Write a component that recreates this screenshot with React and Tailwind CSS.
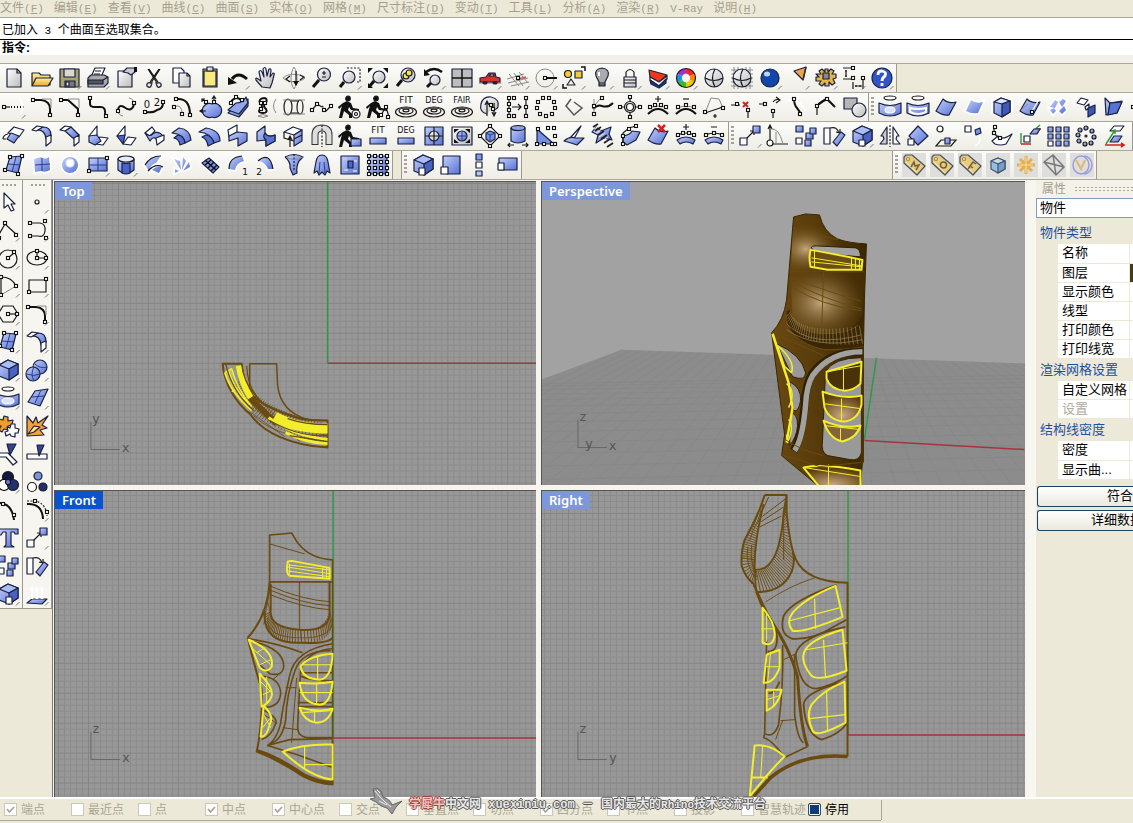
import React from "react";

/* ---------- Icon notation ----------
   Each icon is a "|"-separated list of strokes and fills on a 24x24 grid. */
const FILLS = { b: "url(#blue)", w: "#fff", v: "url(#grey)", y: "url(#gold)", s: "#111", x: "none" };
const STROKES = {
  k: ["#1a1a1a", 1.2], K: ["#111", 2], g: ["#8a8a8a", 1], r: ["#d02020", 1.6], G: ["#2d9a3a", 1.4],
  H: ["#fff", 4], m: ["#2c3c88", 1], W: ["#fff", 1.3],
};

function Op({ op }) {
  const i = op.indexOf(" ");
  const c = i < 0 ? op : op.slice(0, i);
  const d = i < 0 ? "" : op.slice(i + 1);
  if (c === "z") return <path d="M20 23.5L23.500 20" stroke="#777" strokeWidth="1" />;
  if (c === "n")
    return d.split(" ").map((p) => {
      const [x, y] = p.split(",").map(Number);
      return <rect key={p} x={x - 1.5} y={y - 1.5} width="3" height="3" fill="#fff" stroke="#111" strokeWidth="1.100" />;
    });
  if (c === "o") {
    const [x, y, rx, ry, f, s] = d.split(",");
    return <ellipse cx={x} cy={y} rx={rx} ry={ry} fill={FILLS[f] || f} stroke={s || "#1a1a1a"} strokeWidth="1.200" />;
  }
  if (c === "t") {
    const [x, y, s, t] = d.split(",");
    return <text x={x} y={y} fontSize={s} textAnchor="middle" className="font-['DejaVu_Sans']" fill="#111">{t}</text>;
  }
  if (c === "d") return <path d={d} fill="none" stroke="#222" strokeWidth="1.200" strokeDasharray="2 1.500" />;
  if (c === "h") return <g><path d={d} fill="#fff" stroke="#fff" strokeWidth="3.500" /><path d={d} fill="url(#blue)" /></g>;
  if (c[0] === "/") {
    const [s, w] = c.slice(1).split(",");
    return <path d={d} fill="none" stroke={s} strokeWidth={w} />;
  }
  if (STROKES[c]) return <path d={d} fill="none" stroke={STROKES[c][0]} strokeWidth={STROKES[c][1]} />;
  return <path d={d} fill={FILLS[c] || c} stroke={c === "s" ? "none" : "#1b2140"} strokeWidth="1.200" strokeLinejoin="round" />;
}

function Tool({ name, art, soft }) {
  return (
    <button type="button" aria-label={name} title={name} className="grid h-7 w-7 shrink-0 place-items-center">
      <svg viewBox="0 0 24 24" className={soft ? "h-6 w-6 bg-[#dededc]" : "h-6 w-6 overflow-visible"} aria-hidden="true">
        <g opacity={soft ? 0.75 : 1}>{art.split("|").map((op, i) => <Op key={i} op={op} />)}</g>
      </svg>
    </button>
  );
}

const man = "o 10,3.500,2.300,2.300,s|s M5 8L9 6L13 8L15 13L21 14V16L13 15L11 12L10 15L14 19V23H11V20L6 16L4 23H1L3 14L4 11L1 14L0 12Z";
const rings = "o 12,17,10.500,5,x|o 12,16,7,3,x|o 12,15.500,3,1.300,x";
const boxArt = "b M3 7L12 2L22 6V16L13 22L3 18Z|#a9bdf6 M3 7L12 2L22 6L13 11Z|#4a62c4 M13 11L22 6V16L13 22Z";
const surf = "b M2 16L9 4Q14 9 22 7L15 20Q9 21 2 16Z";
const fillet = "K M3 5H11Q20 6 20 14V20|g M12 4H21V13|n 3,5 20,20";
const tag = "#e9c760 M2 4L4 2L10 2L23 13L15 22L2 10Z|o 6,6,1.500,1.500,#fff7d0,#8a6a20|/#fff0a8,1 M4 9L15 20";
const moveArt = "k M7 16L16 7M12 7H16V11|w M2 14H9V21H2Z|b M15 2H22V9H15Z";
const arrayArt = "b M2 2H9V8H2Z|b M12 9H19V15H12Z|b M16 4H22V10H16Z|w M2 14H8V20H2Z|b M11 16H17V22H11Z";
const rotArt = "w M2 4H8V20H2Z|k M8 4Q15 2 17 9M14 8L18 9L18 5|b M11 18L19 8L23 11L15 22Z";
const shell = "w M2 8L11 3L20 6L12 11Z|b M12 11L20 6V17L12 22Z|k M12 15L20 11M2 8V14L12 17";

const standard = {
  New: "v M5 3H15L19 7V21H5Z|k M15 3V7H19",
  Open: "y M2 7H9L11 9H20V19H2Z|y M6 12H23L18 20H2Z",
  Save: "#aaa26e M2 3H21V21H2Z|#d9d9d0 M6 3H17V11H6Z|#777 M7 15H17V21H7Z|#ddd M8 16H11V20H8Z|z",
  Print: "w M9 2H19L15 11H5Z|#aaa M2 12L5 9H18L22 11V17L18 21H2Z|#555 M2 14H17V18H2Z|k M17 14L22 11M9 5H15M8 8H14|z",
  Properties: "v M4 5H14L18 8V21H4Z|#ccc M9 6L13 2H21V6L17 9L14 7Z|s M20 1H23V6H20Z",
  Cut: "k M6 3L15 17M7 3L16 16M18 3L9 17M17 3L8 16|/#334,1.500 M9 17Q4 16 5 20Q9 24 10 16M15 17Q20 16 19 20Q15 24 14 16",
  Copy: "w M3 2H11L14 5V17H3Z|v M9 7H17L20 10V21H9Z|k M17 7V10H20",
  Paste: "#c8a93c M5 3H19V21H5Z|#f8ea80 M6 5H18V20H6Z|v M9 1H15V5H9Z",
  Undo: "/#111,3 M6 13Q12 5 21 13|s M2 11L11 17L2 19Z|z",
  Pan: "v M8 21L2 14Q1 11 4 13L7 15L5 6Q6 3 8 6L10 11L9 3Q11 0 12 3L13 10L15 3Q17 2 17 5L16 11L19 7Q21 7 20 9L18 17L16 22Z",
  "Rotate view": "g M12 1C8 7 8 17 12 23C16 17 16 7 12 1M1 12C6 7 18 7 23 12C18 17 6 17 1 12|k M14 5V19M8 16L4 13L8 10M18 9L22 11L18 14|s M11 15L14 20L17 15Z",
  "Zoom dynamic": "v M14 2A6.500 6.500 0 1 0 14 15A6.500 6.500 0 1 0 14 2|k M14 5V9M12 7H16M12 11H16|/#111,3 M9 14L3 21",
  "Zoom window": "d M9 2H22V16H18|v M11 5A6 6 0 1 0 11 17A6 6 0 1 0 11 5|/#111,3 M6 16L2 21|z",
  "Zoom extents": "v M13 5A6 6 0 1 0 13 17A6 6 0 1 0 13 5|/#111,3 M8 15L3 21|s M2 2H7L2 7ZM22 2V7L17 2ZM22 22H17L22 17ZM2 22V17L7 22Z",
  "Zoom selected": "v M14 2A7 7 0 1 0 14 16A7 7 0 1 0 14 2|o 12,10,3,3,#f4e34a|o 15,7,3,3,#f4e34a|/#111,3 M8 14L3 20",
  "Undo zoom": "/#111,2.500 M4 6Q12 0 20 6|s M2 3L8 9L2 10Z|v M13 9A5 5 0 1 0 13 19A5 5 0 1 0 13 9|/#111,3 M9 17L5 21|z",
  "Four views": "#bdbdbd M2 3H22V21H2Z|/#111,1.500 M12 3V21M2 12H22",
  "Set view": "/#e33,1 M1 17H23|#d93226 M2 12L8 11L11 7H17L18 11L22 12V16H2Z|#222 M5 16A2 2 0 1 0 9 16ZM15 16A2 2 0 1 0 19 16Z|#fff M13 8H15L16 10H11Z|z",
  "Set CPlane": "g M3 8L13 20M8 7L17 20M13 6L22 17M2 17L22 12M1 13L18 8M5 20L23 16|/#b55,1.500 M12 13L20 11|n 12,12|z",
  "Object snap": "g M11 3A9 9 0 1 0 11 21A9 9 0 1 0 11 3|K M12 12H23|n 11,12|z",
  Select: "o 6,8,3.500,3.500,#f3cc35|#f3cc35 M13 5H20V12H13Z|#fff0c0 M5 19L9 13L13 19Z|/#111,1.500 M19 1H23V5M1 18V22H5|z",
  Light: "#aaa M12 2Q4 3 6 10L9 16V20H15V16L18 10Q20 3 12 2|k M9 17H15M9 19H15|/#fff,2 M9 6V10|z",
  Lock: "k M8 11V6Q12 1 16 6V11|v M6 11H18V21H6Z|k M6 14H18M6 17H18|z",
  Render: "#f03818 M3 4L21 9L13 16L4 11Z|#fff M4 11L13 16L21 10V13L13 20L4 14Z|#183ca0 M4 14L13 20L20 13V17L13 22L5 18Z|z",
  Colour: "/#f22,5 M12 5A7 7 0 0 1 18 9|/#f80,5 M18 9A7 7 0 0 1 18 15|/#ec0,5 M18 15A7 7 0 0 1 12 19|/#3b3,5 M12 19A7 7 0 0 1 6 15|/#19d,5 M6 15A7 7 0 0 1 6 9|/#93d,5 M6 9A7 7 0 0 1 12 5|o 12,12,9.500,9.500,x|z",
  Shade: "v M12 3A9 9 0 1 0 12 21A9 9 0 1 0 12 3|k M3 12Q12 17 21 12M13 3Q8 12 13 21",
  "Shade grid": "g M1 4H23M1 8H23M1 12H23M1 16H23M1 20H23M4 1V23M8 1V23M16 1V23M20 1V23|v M12 3A9 9 0 1 0 12 21A9 9 0 1 0 12 3|k M3 12Q12 17 21 12M13 3Q8 12 13 21",
  Preview: "#1146aa M12 3A9 9 0 1 0 12 21A9 9 0 1 0 12 3|o 9,8,3,2.500,#bcd8ff,none|z",
  Spotlight: "#f0a24a M8 5L20 1L17 14Z|/#333,1.500 M20 1L17 14|z",
  Options: "#e3b64a M7 8L5 5L8 3L11 6V3H14V6L17 3L20 5L18 8L22 8V12L19 13L21 17L18 19L15 16V20H11V17L8 20L5 18L7 15L2 15V11L5 11L2 8Z|#888 M9 7H15V13H9Z|z",
  Dimension: "k M1 2H11M1 13H11M4 4V11M3 5L5 5M3 10L5 10M11 16V23M21 12V23M13 20H20M14 19V21M18 19V21|n 11,2 11,12 21,12|z",
  Help: "#2f55c8 M12 2A10 10 0 1 0 12 22A10 10 0 1 0 12 2|/#fff,2.800 M8 9Q8 5 12 5Q17 6 15 10Q12 12 12 15M12 17V20|z",
};

const curves = {
  Extend: "/#111,2 M9 12H10M12 12H13M15 12H16M18 12H19M21 12H22|k M2 12H8|n 2,12|W M18 4Q24 12 18 20|z",
  "Fillet curves": fillet,
  "Chamfer curves": "K M3 5H10L20 14V20|g M10 4H21V13|n 3,5 20,20",
  "Connect curves": "K M4 4V9Q4 12 9 12H15Q20 12 19 20|n 4,3 20,21",
  "Blend curves": "K M4 16Q4 9 10 12Q18 18 20 9|g M4 16Q4 20 9 21M20 9Q20 4 15 3|n 4,16 20,8",
  "Blend adjust": "K M3 17Q12 18 15 15Q21 14 21 8|n 3,17 21,7|t 5,13,10,0|t 15,11,10,2",
  Offset: "K M7 4Q20 3 20 20|g M5 11Q12 10 12 18|n 6,4 20,20 4,12 12,19",
  "Blend sphere": "b M14 9A7 7 0 1 0 14 22A7 7 0 1 0 14 9|k M3 16H8M8 7L4 4M16 8V2M14 4L16 1L18 4M5 14L2 16L5 18M4 7V4H7|n 8,7 16,7",
  "Offset on surface": "b M2 18L10 11Q19 10 22 4V11L13 22Z|#8fa6ee M2 15L10 8Q17 8 20 2L22 8L13 19Z|K M4 8Q9 0 15 5|n 5,8 10,2 16,5",
  "Closed curve": "K M10 3Q4 4 6 8Q10 11 6 14Q3 18 9 18Q14 18 12 14Q8 11 12 8Q14 3 10 3|g M4 21Q9 18 14 21Q9 24 4 21M22 4Q17 11 22 18|n 7,8 11,8 7,14",
  Section: "o 6,12,4,8,x|o 18,12,3,7,x|g M1 5H23M1 19H23|k M9 6H17M9 18H17",
  "Match curve": "k M2 15L7 9L12 12M16 16L21 11|d M12 11L15 14|n 2,15 7,9 14,15 21,11",
  "Rebuild curve": man + "|o 18,19,4,4,#fff|o 18,19,1.500,1.500,#fff",
  "Rebuild master": man + "|k M15 20L20 12L23 22|n 15,20 20,12 22,22",
  Fit: rings + "|t 12,8,9,FIT",
  Degree: rings + "|t 12,8,8,DEG",
  Fair: rings + "|t 12,8,8,FAIR",
  Simplify: "v M9 19Q1 17 3 9Q5 1 13 2Q22 4 20 12Q18 16 14 13|k M9 21V7M7 10L9 6L11 10M16 8V20M14 17L16 21L18 17|n 13,10 15,14",
  "Control points": "k M3 2V22M20 2V22M6 12H15M12 9L15 12L12 15|n 3,3 3,9 3,15 3,21 8,3 8,21 20,3 20,12 20,21",
  "Edit points": "n 9,3 15,3 20,7 21,13 18,19 12,21 6,19 3,13 4,7",
  Seam: "/#555,1.500 M9 4L4 11L12 20L20 13L12 7",
  "Handle editor": "K M3 14Q8 9 12 11Q18 13 23 8|g M4 4V19M4 11L11 3|n 4,11 4,19 12,3",
  Weight: "k M3 12H21M12 3V21|o 12,12,5.500,5.500,v|o 12,12,3.500,3.500,w|n 12,2 12,22 2,12 22,12",
  "Insert knot": "K M2 19Q12 9 22 19|g M2 14Q12 8 22 14|k M12 1V7M9 4H15|n 4,12 9,10 15,10 20,12",
  "Remove knot": "K M2 19Q12 9 22 19|g M2 14Q12 8 22 14|k M9 4H15|n 4,12 12,10 20,12",
  "Insert point": "g M3 18L9 3L17 4L21 13|k M3 18L21 12M13 19V23M11 21H15|n 3,17 21,13",
  "Insert kink": "k M1 10H10M18 16V23|/#c22,2 M13 7L18 12M18 7L13 12|n 7,9 18,15",
  "Pull points": "k M1 9H8M15 7Q18 3 22 5M18 2L22 5L18 8M15 16V23|n 7,9 15,16",
  "Arc blend": "K M8 3Q8 10 11 13T15 21|W M2 5Q13 3 20 16|n 8,4 14,19",
  "Curve through": "k M3 11L13 4M3 11V20|K M3 11Q7 6 13 4L21 12|n 3,11 13,4",
  "Curve boolean": "#b6b6b6 M2 3H15V14H2Z|v M17 8A7 7 0 1 0 17 22A7 7 0 1 0 17 8",
};

const tube = (inner) => "b M1 8Q12 13 23 8V18Q12 24 1 18Z|o 12,3,6,2,w|" + inner;
const surfaces = {
  "Untrim hole": tube("o 12,15,5,3,#dbe4ff,#fff"),
  "Untrim edge": tube("/#fff,2 M4 13Q12 15 20 13V17Q12 21 4 17Z"),
  "Shrink surface": surf,
  "Surface plain": "h M4 16L9 5Q14 9 21 7L16 18Q9 19 4 16Z",
  "Solid box": "W M2 5L10 1L22 5V17L13 23L2 18Z|b M4 7L11 3L20 6V17L12 22L4 18Z|#dce4ff M4 7L11 3L20 6L12 9Z|#4058b8 M12 9L20 6V17L12 22Z",
  "Split edge": surf + "|W M13 18L20 6|g M3 15L10 9|n 14,17",
  "Split surface": "h M4 12L9 5L12 7L9 13ZM13 7L17 4L20 6L16 12ZM4 15L8 13L10 16L7 19ZM13 16L18 11L20 15L16 19Z",
  Detach: "w M3 8L7 3L14 5L10 10Z|w M11 12L15 9V13L12 15Z|#3d54b0 M14 13L21 10V18L14 22Z",
  "Merge surface": "b M3 3L8 8L20 6L15 18L4 20Z|k M8 8L6 20|#5673d8 M8 8L20 7L15 18L6 20Z",
  "Surface side": "n 3,12|b M8 4H20V20H8Z",
};

const surfTools = {
  "Extend surface": "w M6 9L12 3L22 6L17 13Z|b M5 15L9 9L17 12L12 19Z|k M1 15Q1 11 6 10M1 15L4 15",
  "Fillet surface": "b M6 6Q15 5 16 15L21 12Q21 3 13 3Z|w M2 6L7 2L13 3L6 7Z|w M16 13L21 11V18L16 22Z",
  "Chamfer surface": "b M7 7L13 3L21 11L16 15Z|w M2 6L7 2L13 3L7 7Z|w M16 14L21 11V18L16 22Z",
  "Blend 3": "w M3 12L11 2V11L8 13Z|w M14 13L22 14L17 21L9 20Z|b M3 12L11 11L15 17L9 21L3 18Z",
  "Chamfer 3": "w M3 12L11 2V11L8 13Z|w M14 13L22 14L17 21L9 20Z|#4964c8 M3 12L11 11L9 20Z",
  "Blend surface": "w M3 9L10 3L13 7L8 12Z|b M3 9Q7 14 12 9Q17 7 21 12L16 18Q12 10 8 17Z|w M14 14L22 11V16L15 21Z",
  "Offset surface": "b M2 9L9 4Q20 5 21 16L15 19Q14 10 2 9Z|#526fd3 M4 14L8 11Q14 12 15 19L10 21Q9 15 4 14Z",
  "Variable offset": "b M1 8L8 4Q22 6 22 17L16 19Q13 9 1 8Z|#526fd3 M4 13L8 11Q14 12 16 19L10 22Q9 15 4 13Z",
  "Match surface": "w M2 6L11 1V8L3 13Z|b M3 12L11 8L21 9V17L12 22V14L3 17Z",
  "Merge edge": "b M3 8L11 2V9Q14 14 21 11V17L12 22V16L3 17Z|#5873d4 M11 9Q14 14 21 11V17L12 22V16Q8 13 11 9Z",
  Unroll: shell + "|k M8 23V13M6 16L8 12L10 16",
  Tween: "/#333,7 M5 21V11Q5 4 12 4Q19 4 19 11V21|/#ddd,5 M5 20V11Q5 4 12 4Q19 4 19 11V20|d M12 1V23",
  "Rebuild surface": man + "|b M13 15H23V22H13Z",
  "Fit surface": "t 12,9,9,FIT|b M4 14H20V20H4Z",
  "Change degree": "t 12,9,8,DEG|b M4 14H20V20H4Z",
  Reparam: "b M3 3H21V21H3Z|v M12 7A5 5 0 1 0 12 17A5 5 0 1 0 12 7|k M12 3V21M3 12H21",
  "Fit to box": "v M2 3H22V21H2Z|b M12 7A5 5 0 1 0 12 17A5 5 0 1 0 12 7|s M4 5H9L4 9ZM20 5V9L15 5ZM20 19H15L20 15ZM4 19V15L9 19Z|m M12 7V17M7 12H17",
  "Cage edit": "k M2 12L12 2L22 12L12 22Z|#7692e8 M8 9L12 7L17 9V15L12 18L8 15Z|m M12 11V18M8 9L12 11L17 9|n 12,2 22,12 12,22 2,12",
  "Cylinder edit": "b M5 4V17Q12 21 19 17V4Z|o 12,4,7,2.500,#8aa3f0|k M2 21H8M16 21H22M4 19L2 21L4 23M20 19L22 21L20 23",
  Taper: "#7390e8 M3 20V5L20 20Z|n 3,20 10,20 18,20 4,5 14,4 20,4 21,20 21,12",
  Bend: "w M8 14L19 2L13 13L10 16Z|b M2 17Q8 12 13 14L22 14L15 21L9 19Z",
  Twist: "b M6 3L11 7L21 3L19 10L22 16L14 14L6 19L8 11L2 8Z|/#222,1.800 M3 3L8 0M5 7L11 3M8 11L14 7M11 15L17 11M14 19L20 15M17 23L23 19|/#eee,1 M4 5L9 2M6 9L12 5M9 13L15 9M12 17L18 13",
  Flow: "b M5 12Q12 11 14 7L22 8L18 16L9 21L5 18Z|k M5 20V9L11 4L18 2|n 5,20 5,12 11,5 18,2",
  "Delete face": surf + "|/#d12020,2.500 M12 1L19 8M19 1L12 8",
  "Surface insert": "k M12 0V6M9 3H15M2 12Q12 6 22 12|b M3 16Q12 10 21 16L19 20Q12 16 6 20Z|n 4,11 9,9 15,9 20,11",
  "Surface remove": "k M9 3H15M2 12Q12 6 22 12|b M3 16Q12 10 21 16L19 20Q12 16 6 20Z|n 4,11 12,9 20,11",
};

const transform = {
  Move: moveArt + "|z",
  Bounce: "k M4 20V2M2 5L4 1L6 5M4 20H22|g M4 5Q13 3 17 20M10 8V20|o 4,19,3,3,w",
  Copies: arrayArt,
  Rotate: rotArt,
  Scale: boxArt + "|w M9 16H15V22H9Z|z",
  Mirror: "#ccc M9 3V20H2L6 15L5 12L3 12Z|w M15 3V20H22L18 15L19 12L21 12Z|d M12 1V23",
  "Scale 2D": "b M12 2L22 12L12 21L3 12Z|w M2 15H8V21H2Z",
  Orient: "o 6,5,3,3,w|k M2 22L7 16H22L17 22Z|b M11 14H16V20H11Z",
  "Orient 3": "w M3 2H9V8H3Z|#7692e8 M13 6L18 4L19 9L14 11Z|W M13 22Q20 18 17 12",
  "Orient surface": "w M2 17L8 12Q12 17 22 10L16 20Q10 22 5 20Z|k M4 3Q3 10 9 14|n 5,3 4,9 10,14",
  "Orient axis": "/#c22,1.500 M3 20H13M18 5H23|G M3 20V9M14 8L22 1|b M12 10L16 5H22L19 10Z|w M6 12H12V18H6Z",
  Array: "b M2 3H7V8H2Z|b M10 3H15V8H10Z|b M18 3H23V8H18Z|b M2 10H7V15H2Z|b M10 10H15V15H10Z|b M18 10H23V15H18Z|w M2 17H7V22H2Z|b M10 17H15V22H10Z|b M18 17H23V22H18Z|z",
  "Polar array": "o 12,4,2,2,b|o 18,7,2,2,b|o 20,13,2,2,b|o 17,19,2,2,b|o 11,20,2,2,b|o 5,17,2,2,b|o 4,11,2,2,b|o 6,6,2,2,b|o 12,12,1,1,w",
  "Project plane": "w M8 7L12 2H22L18 7Z|G M4 20L13 6M10 7L13 6L13 10|b M8 18L12 12H20L16 18Z|r M3 21H22M19 19L22 21L19 23",
};

const meshTools = {
  "Corner surface": "b M8 4L20 3L16 20L4 17Z|m M14 4L10 19M6 11L18 12|n 8,4 20,3 16,21 3,17",
  Patch: "h M4 6L11 4Q15 7 19 4L20 17Q15 20 11 18L5 19Z|m M12 5V18M5 12L20 11",
  Ring: "h M12 4A8 8 0 1 0 12 20A8 8 0 1 0 12 4|o 12,10,4,4,#fff,#dfe6ff",
  Plane: "b M3 5H21V18H3Z|m M12 5V18M3 12H21|n 3,18 21,5|z",
  Extrude: "b M4 6V17Q12 24 20 17V6Z|o 12,6,8,3,#e4eaff|#4963c8 M8 10V20Q12 22 16 20V10Q12 11 8 10Z|z",
  Sweep: "h M3 12Q8 3 18 4L14 10Q9 11 7 18ZM10 17Q14 13 20 14L17 20Z|k M3 12Q8 3 19 3M6 18Q13 10 21 14",
  Fan: "h M4 6L10 8L11 17ZM13 4L16 8L12 17ZM19 9L20 14L13 18ZM5 16L9 18L5 20Z",
  Loft: "H M4 10L11 5L21 14L15 20Z|#7c96eb M4 10L11 5L21 14L15 20Z|/#111,1.500 M7 7L18 17M10 15L16 9M7 12L13 7M13 18L19 12",
  "Sweep 1": "h M3 16Q3 5 16 3L18 8Q10 10 9 17Z|k M3 16Q3 4 16 3|t 19,22,9,1",
  "Sweep 2": "h M8 6Q16 1 19 16H14Q12 10 5 8Z|k M4 8Q16 -2 19 16|t 5,22,9,2",
  Revolve: "b M3 4Q9 9 8 15L11 22L15 20Q14 14 17 8L21 4Q12 -1 3 4|d M12 1V17|g M4 4Q12 9 21 4",
  Drape: "b M4 20L6 9Q7 2 12 2Q17 2 18 9L20 20L17 18L15 22L12 19L9 22L7 18Z|m M10 9L9 20M14 9L15 20",
  Heightfield: "b M3 3H21V21H3Z|#4865c8 M10 8H15V15H10Z|/#b7c6f8,2 M5 6H9M16 8H19M6 17H10M15 18H19",
  "Point grid": "b M3 3H21V21H3Z|n 3,3 9,3 15,3 21,3 3,9 9,9 15,9 21,9 3,15 9,15 15,15 21,15 3,21 9,21 15,21 21,21",
};

const scaleTools = {
  "Scale 3D": boxArt + "|w M8 15H14V22H8Z",
  "Scale plane": "b M4 3H21V21H8V15H4Z|w M2 14H9V21H2Z",
  "Scale 1D": "#7f9af0 M9 1H15V7H9Z|w M9 9H15V15H9Z|#b7c5f4 M9 18H15V23H9Z",
  "Non-uniform": "b M4 5H22V17H4Z|w M3 10H9V17H3Z",
};

const display = {
  Material: tag + "|/#4a3510,1.500 M9 14L12 9L13 13L17 12L14 17",
  Object: tag + "|/#4a3510,1.500 M13 9A3 3 0 1 0 14 15A3 3 0 1 0 13 9",
  Frame: tag + "|/#4a3510,1.500 M10 16L15 9L18 11M12 13L15 15",
  Cube: "#7eb7e4 M5 8L12 5L19 8V16L12 20L5 16Z|#b5ddf5 M5 8L12 5L19 8L12 11Z|#508dc3 M12 11L19 8V16L12 20Z",
  Star: "/#e8a020,3 M12 3V21M3 12H21M6 6L18 18M18 6L6 18|/#ffe69a,1 M12 4V20M5 12H19",
  Envelope: "/#555,1.500 M2 9L11 2L22 14L14 22ZM2 9L22 14M11 2L14 22",
  Circle: "/#8888df,1.500 M11 3A8 9 0 1 0 11 21A8 9 0 1 0 11 3M14 3A8 9 0 1 1 14 21|/#ddb04f,2 M6 7L11 16L15 7",
};

const leftCol = {
  Pointer: "w M8 3V18L12 15L15 21L18 20L15 14H19Z",
  Polyline: "k M1 20L9 6L21 17|n 3,20 9,5 20,17|z",
  Circle2: "o 12,13,9,9,x|k M12 12L18 7|n 12,12 18,6|z",
  Arc: "k M5 3Q16 3 20 12M5 3V21|g M5 21L20 12|n 5,3 5,21 20,12|z",
  Polygon: "k M7 4H17L22 12L17 20H7L2 12Z|k M12 12H21|n 12,12 21,12|z",
  Surface: "b M8 3L20 4L16 20L4 17Z|m M14 4L10 18M6 11L18 12|n 8,3 20,3 16,20 4,16|z",
  Box: boxArt + "|z",
  Pipe: tube("o 12,15,6,3,#dbe4ff,#fff") + "|z",
  Join: "#ef9d2d M3 5L7 6L8 2L12 3L12 7L17 6L16 11L12 12L12 16L8 15L6 18L3 16L5 12L1 11Z|w M11 13L14 14L15 10L19 10L19 14L23 15L22 19L19 19L19 23L15 22L14 20L10 22L9 18L12 17Z",
  Trim: "w M2 11H12L21 20L17 23L10 15H2Z|#31458e M11 2H20L14 13Z",
  Group: "o 12,7,5.500,5.500,#101a40|o 8,15,5.500,5.500,#fff,#000|o 17,15,5.500,5.500,#203070|o 12,12,2.500,2.500,#6a7fc8|z",
  "Point edit": "K M2 5Q16 5 18 22|n 7,6 18,17",
  Text: "b M3 3H22V8H19L18 6H15V19L18 21H8L10 19V6H7L5 9H3Z",
  Copies2: arrayArt,
  Scale2: boxArt + "|w M10 15H16V22H10Z|z",
};
const rightCol = {
  Point: "o 12,12,2,2,w|z",
  Curve: "k M5 5H15Q21 6 20 13Q19 20 13 18L5 18|n 5,5 20,3 5,18 21,20|z",
  Ellipse: "o 12,12,10,7,x|k M12 5V12H21|n 12,5 12,12 21,12|z",
  Rectangle: "k M4 6H21V18H4Z|n 21,5 4,18|z",
  Fillet2: fillet + "|z",
  Fillet3: "b M6 6Q15 5 16 15L21 12Q21 3 13 3Z|w M2 6L7 2L13 3L6 7Z|w M16 13L21 11V18L16 22Z|z",
  Boolean: "b M15 2A7 7 0 1 0 15 16A7 7 0 1 0 15 2|b M8 9A7 7 0 1 0 8 23A7 7 0 1 0 8 9|m M2 16Q8 19 15 16M9 9Q5 16 9 23M10 6Q15 11 22 9|z",
  "Mesh surface": "b M3 16L10 5L23 3L15 20Z|m M7 11L19 10M10 17L16 4|z",
  Explode: "#f4a334 M2 2L8 9L11 3L13 9L23 2L17 11L22 14L15 16L19 21L2 22Z|#ffe38a M3 20L9 12L15 13L9 18Z",
  Split: "w M2 12H22V17H2Z|#31458e M12 3H19L14 14Z",
  Ungroup: "o 13,6,4,4,#7b93dc|o 7,17,4.500,4.500,w|o 18,17,4,4,#203070",
  "Points on": "K M2 6Q17 5 18 21|d M2 3H11Q21 6 22 18|n 10,3 22,14|z",
  Move2: moveArt + "|z",
  Rotate2: rotArt,
  "Extrude up": "b M2 21L7 17H22L17 22Z|/#fff,2.500 M7 17V6M12 17V5M17 17V6|/#fff,1 M4 8L7 4L10 8M14 8L17 4L20 8|z",
};

const Bar = ({ tools, grip, soft, className = "" }) => (
  <div className={`flex shrink-0 items-center border-r border-[#9d9a8c] bg-linear-to-b from-[#fcfcfa] to-[#eeede6] ${className}`}>
    {grip && <span className="mx-[2px] h-5 w-[3px] shrink-0 bg-[repeating-linear-gradient(#a5a295_0_2px,transparent_2px_4px)]" />}
    {Object.entries(tools).map(([name, art]) => <Tool key={name} name={name} art={art} soft={soft} />)}
  </div>
);

const Column = ({ tools, className }) => (
  <div className={`flex shrink-0 flex-col items-end overflow-hidden border-r border-b border-[#9d9a8c] bg-[#f6f5f0] ${className}`}>
    <span className="mx-1 mt-1 mb-[2px] h-[2px] w-4 shrink-0 bg-[repeating-linear-gradient(90deg,#a5a295_0_2px,transparent_2px_4px)]" />
    {Object.entries(tools).map(([name, art]) => <Tool key={name} name={name} art={art} />)}
  </div>
);

/* ---------- Model geometry ---------- */
const quad = ([a, b, c, d, e, f], t) => {
  const u = 1 - t;
  return [u * u * a + 2 * u * t * c + t * t * e, u * u * b + 2 * u * t * d + t * t * f].map((n) => n.toFixed(1)).join(" ");
};
const hatch = (A, B, n) => Array.from({ length: n + 1 }, (_, i) => `M${quad(A, i / n)}L${quad(B, i / n)}`).join("");

const BR = "#6a4a10";
const Br = ({ d, w = 2, f = "none" }) => <path d={d} fill={f} stroke={BR} strokeWidth={w} strokeLinejoin="round" />;
const Ye = ({ d, w = 2, f = "none" }) => <path d={d} fill={f} stroke="#f2ee2c" strokeWidth={w} strokeLinejoin="round" />;
const Axes = ({ x, y, v, h }) => (
  <g>
    <path d={`M${x} ${y - 28}V${y}H${x + 29}`} stroke="#666" fill="none" />
    <text x={x + 1} y={y - 27} fontSize="13" fill="#555" className="font-['DejaVu_Sans_Mono']">{v}</text>
    <text x={x + 31} y={y + 2} fontSize="13" fill="#555" className="font-['DejaVu_Sans_Mono']">{h}</text>
  </g>
);

function Viewport({ title, active, box, children, grid }) {
  const [x, y] = box.split(" ");
  return (
    <section className="relative min-h-0 min-w-0 overflow-hidden border-t border-l border-[#555] bg-[#989898]">
      <svg viewBox={box} preserveAspectRatio="xMinYMin slice" className="absolute inset-0 h-full w-full" aria-label={`${title} view`}>
        {grid && <rect x={x} y={y} width="600" height="400" fill="url(#grid)" />}
        {children}
      </svg>
      <h2 className={`relative inline-block px-[7px] font-['Noto_Sans'] text-[13px] leading-[18px] font-semibold text-white ${active ? "bg-[#0a52d0]" : "bg-[#7c97da]"}`}>{title}</h2>
    </section>
  );
}

const TopView = () => (
  <>
    <path d="M328 182V363" stroke="#2f9a45" strokeWidth="1.500" />
    <path d="M328 363.500H640" stroke="#a8333f" strokeWidth="1.500" />
    <Br w={0.8} d={hatch([232, 388, 250, 425, 328, 446], [243, 380, 265, 412, 328, 424], 38)} />
    <Br w={0.8} d="M252 404Q270 430 328 440M256 402Q276 426 328 436M253 396Q270 412 306 420M258 400Q280 414 314 421M250 412L285 437M262 402L300 442M254 416Q270 434 328 444" />
    <Br d="M242 364H223C224 384 237 404 251 415C263 433 292 446 328 448V421Q310 421 300 419Q266 409 253 396Q243 381 242 364Z" />
    <Br w={1.5} d="M250 392V364H277L278 386Q281 412 308 420" />
    <Br w={6} d="M250 398L277 424" />
    <Ye w={6} d="M239 366Q242 384 251 398" />
    <Ye w={1.5} d="M225 373L232 369Q237 389 252 407M225 373Q231 393 252 411M229 371Q235 391 250 405M232 392L238 389" f="#bdbd7c" />
    <Ye w={10} d="M275 417Q296 429 328 429" />
    <Ye w={3} d="M269 418Q293 436 328 440M286 433Q309 444 328 444" />
    <Br w={1.2} d="M242 364Q243 383 261 402M226 364Q232 392 254 411M270 421Q300 438 328 436M288 419Q305 425 328 425M290 436L328 442M247 366Q248 390 262 402" />
    <Axes x={91} y={450} v="y" h="x" />
  </>
);

const PerspectiveView = () => (
  <>
    <rect x="541" y="182" width="700" height="500" fill="#a2a2a2" />
    <path d="M541 380L622 350L1240 371V700H541Z" fill="#8c8c8c" />
    <path d={Array.from({ length: 26 }, (_, i) => `M541 ${384 + i * i * 0.5 + i * 2}L1240 ${372 + i * i * 0.4 + i * 3}`).join("") + Array.from({ length: 46 }, (_, i) => `M${622 + i * 10} ${350 + i * 0.35}L${300 + i * 25} 500`).join("")} stroke="#777" strokeWidth="0.500" opacity="0.35" />
    <path d="M877 358L865 440" stroke="#2f9a45" strokeWidth="1.500" />
    <path d="M865 441L1025 450" stroke="#a8333f" strokeWidth="1.500" />
    <path d="M794 217L806 214L820 215Q824 232 838 239Q848 243 867 244L865 300L864 349L863 463L861 486H818L782 456L785 435L772 333Q784 321 787 300Z" fill="url(#body)" stroke="#3b2600" />
    <path d="M794 217L820 215Q824 232 867 244V271L791 272Z" fill="url(#shine)" />
    <path d="M791 273H866L862 330Q824 340 793 322Z" fill="url(#shine2)" />
    <path d="M787 312Q786 342 824 349Q850 350 864 345V312Q858 333 828 334Q793 334 791 309Z" fill="#3a2604" />
    <Br w={1} d="M793 228Q822 235 838 240M791 272H865M824 273L822 334M792 278Q828 292 861 301M792 282Q826 300 862 309M792 287Q822 306 862 311M786 314Q786 340 824 350Q850 350 864 347M791 307Q789 330 822 334Q850 334 859 325M776 336Q804 346 824 356" />
    <path d={hatch([787, 317, 798, 350, 863, 344], [791, 312, 800, 336, 860, 326], 28)} stroke="#958050" strokeWidth="0.700" />
    <path d="M787 324Q812 349 862 335M787 330Q816 350 863 340" stroke="#958050" fill="none" strokeWidth="0.700" />
    <path d="M812 248Q811 246 817 246L856 248Q861 249 861 257L816 253Z" fill="#a1a1a1" stroke="#332000" />
    <Ye d="M811 250Q809 258 811 267L828 270H862L863 260Q840 255 811 250Z" f="#6b4d16" />
    <Ye w={1} d="M815 250V268M812 258L862 266M812 262L862 267M852 257V270M856 258V270M860 259V270" />
    <path d="M863 352Q829 351 812 375Q806 386 805 406Q802 438 794 451" fill="none" stroke="#302000" strokeWidth="8" />
    <path d="M863 352Q830 352 813 376Q807 386 806 406Q803 440 795 451" fill="none" stroke="#a1a1a1" strokeWidth="5.500" />
    <path d="M777 344Q802 355 806 373Q806 382 793 377ZM790 382Q802 388 801 401Q799 413 794 411ZM791 414Q798 413 798 426Q797 438 790 446Z" fill="#999" stroke="#332000" />
    <path d="M826 372Q834 358 862 358V453Q860 462 850 460L828 456Q821 453 823 441Z" fill="#999" stroke="#332000" />
    <path d="M863 357V463" stroke="#4a3104" strokeWidth="3" />
    <Ye d="M827 372L862 362L861 384Q854 391 845 391Q831 390 827 379Z" f="#4a3208" />
    <Ye w={1} d="M827 372L862 366M844 367V391" />
    <Ye d="M823 392Q844 400 862 396V405Q859 420 845 422Q830 421 825 408Z" f="url(#shineY)" />
    <Ye w={1} d="M824 404L861 409M842 399V422" />
    <Ye d="M824 421Q843 430 861 426Q858 438 843 442Q829 439 824 421Z" f="#82633a" />
    <Ye w={1} d="M825 426L861 430M841 429V441" />
    <Ye w={2.500} d="M773 334L789 383L793 408L787 443" />
    <Ye w={1.5} d="M778 346Q796 361 792 373L785 367ZM787 384Q797 392 789 408M789 420Q795 427 788 443L787 435" />
    <Ye d="M804 468Q824 464 861 471V490H822Z" f="url(#shineY)" /><Ye w={1} d="M829 465V490M804 468L861 477" />
    <Br w={1} d="M784 439Q803 452 824 456M782 455Q802 461 820 467L862 463" />
    <Axes x={578} y={448} v="z" h="x" />
    <text x="585" y="448" fontSize="13" fill="#555" className="font-['DejaVu_Sans_Mono']">y</text>
  </>
);

const FrontView = () => (
  <>
    <path d="M333.500 491V738" stroke="#2f9a45" strokeWidth="1.500" />
    <path d="M333 738.500H640" stroke="#a8333f" strokeWidth="1.500" />
    <Br w={1.6} d="M270 582V535L282 534L292 533Q301 551 315 556Q321 559 333 560V740M270 582H333" />
    <Br w={1} d="M270 544L305 554M300 582V629M270 586Q302 600 331 602M270 590Q302 604 331 606M271 595Q303 608 331 610" />
    <Br w={2} d="M270 582Q268 616 248 638M271 584V610Q269 628 300 630Q328 632 330 615V582M265 611Q262 645 303 643Q328 644 333 638" />
    <Br w={0.9} d={hatch([264, 616, 266, 647, 302, 643], [271, 612, 270, 629, 301, 630], 22) + hatch([302, 643, 328, 646, 333, 625], [301, 630, 326, 631, 330, 611], 14)} />
    <Br w={0.8} d="M268 618Q266 638 301 638Q328 639 332 625M270 590L264 625M268 602L272 618" />
    <Br d="M248 638Q254 664 262 690Q263 713 259 742L257 752Q278 760 304 777Q318 784 333 785V740" />
    <Br w={1.6} d="M249 639Q276 643 303 653M251 641Q285 649 284 667Q283 677 270 674L260 665M261 676Q281 678 281 694Q280 708 263 708M263 710Q279 718 276 724Q272 736 262 740M333 644Q295 650 290 676Q283 708 281 724Q277 740 268 746Q302 756 333 768M331 651Q301 651 295 672Q287 695 286 720Q283 740 271 744" />
    <Br w={1.6} d="M333 649Q310 650 301 669L298 727Q298 738 310 738H333M301 673H333M300 676Q310 681 333 681M298 703H333M299 707H333M268 746L290 740L333 739" />
    <Br w={1} d="M286 688H297M283 728L298 730M273 680L279 675M262 714Q270 718 277 724M297 678L292 743" />
    <Br w={3} d="M258 751Q278 757 304 775Q318 782 333 783" />
    <Ye d="M288 563Q287 561 292 561L330 568V579L290 576Q286 574 288 563Z" />
    <Ye w={1} d="M287 567L331 574M287 571L331 577M290 564V575M323 568V579M327 568V579M289 565L330 570" />
    <Ye d="M249 640Q275 651 272 667Q267 674 260 668ZM260 674Q274 688 272 696Q270 703 262 707ZM264 706Q275 716 270 725Q267 738 261 737Z" />
    <Ye w={1} d="M252 648L271 665M260 665L271 660M257 653L265 648M261 682L272 693M263 695L272 691M267 677V703M264 715L271 728M263 728L271 718" />
    <Ye d="M301 667Q308 656 333 654Q332 679 320 680Q303 679 301 667ZM300 683Q319 685 333 682Q331 705 320 705Q302 704 300 683ZM300 708Q319 713 333 709Q329 723 316 723Q304 721 300 708Z" />
    <Ye w={1.2} d="M301 665H333M318 657V680M300 693H333M317 684V705M302 713L331 711M315 711V723" />
    <Ye d="M283 752Q304 744 333 745V780Q311 778 283 752Z" /><Ye w={1.2} d="M305 747V769M304 765H333" />
    <Axes x={91} y={760} v="z" h="x" />
  </>
);

const RightView = () => (
  <>
    <path d="M848.500 491V735" stroke="#2f9a45" strokeWidth="1.500" />
    <path d="M848 735.500H1240" stroke="#a8333f" strokeWidth="1.500" />
    <Br d="M765 495H787V512Q790 545 796 559Q806 582 848 583V757M765 495Q758 518 745 540Q741 552 742 566Q746 578 754 584L757 592Q782 593 792 572Q796 562 793 552M754 584Q756 590 771 620" />
    <Br w={1.8} d="M764 504Q754 545 755 570Q772 571 779 545Q783 530 784 512L787 496" />
    <Br w={1} d="M769 497L762 512M762 517L787 498M761 522L784 507M760 527L782 516" />
    <Br w={0.9} d={hatch([761, 510, 742, 535, 742, 558], [761, 516, 757, 540, 756, 560], 20) + hatch([742, 558, 744, 575, 756, 590], [756, 560, 755, 566, 756, 571], 10)} />
    <Br w={0.9} d={hatch([757, 592, 796, 592, 793, 558], [755, 571, 772, 572, 779, 545], 20) + hatch([793, 558, 788, 530, 787, 502], [779, 545, 783, 530, 784, 513], 16)} />
    <Br w={0.9} d="M750 541Q752 530 760 518M748 548Q745 565 757 580M752 545Q750 562 757 577M766 602Q790 586 815 578M784 520V560" />
    <Br w={3} d="M757 592Q763 609 771 620Q790 648 798 677Q801 728 808 747" />
    <Br w={1.6} d="M783 645Q784 685 779 725Q774 739 765 734L764 738Q773 741 785 758L808 747M795 655V715Q798 740 804 743M767 640L765 734" />
    <Br w={1.8} d="M776 628Q781 652 768 652M780 682Q774 696 769 693M837 585Q793 600 784 616Q779 635 793 639Q814 640 834 627L847 620M846 627Q799 637 796 655Q800 689 817 689Q835 685 848 676M846 682Q805 692 804 705Q806 735 822 740Q842 734 848 722" />
    <Br w={1} d="M784 660L796 654M781 721L796 720M783 721L776 740M765 779L773 776" />
    <Br w={3.500} d="M848 757Q801 753 771 778L754 797" />
    <Ye d="M836 586L843 617Q805 633 793 631Q786 622 793 613Q806 598 836 586ZM843 630L847 671Q817 683 811 675Q798 658 808 647Q818 637 843 630ZM845 682L846 723Q816 739 813 731Q806 715 812 705Q823 691 845 682Z" />
    <Ye w={1.2} d="M790 621L840 608M815 599L816 629M806 650L848 643M824 640L826 678M810 719L846 715M827 690L828 732" />
    <Ye d="M763 608Q776 624 775 636Q773 648 763 643ZM767 655L780 650V668Q774 684 764 683ZM767 690L782 690Q779 706 767 711Z" />
    <Ye w={1} d="M767 612V642M762 629H775M771 652L768 682M766 667H780M774 691V706M767 700L780 696" />
    <Ye d="M755 746Q771 744 785 757Q773 768 750 797ZM751 778H768" /><Ye w={1} d="M763 746L761 778" />
    <Axes x={578} y={760} v="z" h="y" />
  </>
);

/* ---------- Text ---------- */
const menus = [["文件", "F"], ["编辑", "E"], ["查看", "V"], ["曲线", "C"], ["曲面", "S"], ["实体", "O"], ["网格", "M"], ["尺寸标注", "D"], ["变动", "T"], ["工具", "L"], ["分析", "A"], ["渲染", "R"], ["V-Ray"], ["说明", "H"]];
const groups = [
  ["物件类型", ["名称", "图层", "显示颜色", "线型", "打印颜色", "打印线宽"]],
  ["渲染网格设置", ["自定义网格", "设置"]],
  ["结构线密度", ["密度", "显示曲..."]],
];
const snaps = [["端点", 1], ["最近点"], ["点"], ["中点", 1], ["中心点", 1], ["交点"], ["垂直点"], ["切点"], ["四分点", 1], ["节点"], ["投影"], ["智慧轨迹"]];

export default function App() {
  return (
    <div className="relative flex h-screen min-h-[640px] flex-col overflow-hidden bg-[#ece9d8] font-['Liberation_Sans','Noto_Sans_CJK_SC',sans-serif] text-xs text-black">
      <svg width="0" height="0" className="absolute" aria-hidden="true">
        <defs>
          <linearGradient id="blue" x1="0" y1="0" x2="1" y2="1"><stop offset="0" stopColor="#c3d0fb" /><stop offset="1" stopColor="#5570d4" /></linearGradient>
          <linearGradient id="grey" x1="0" y1="0" x2="1" y2="1"><stop offset="0" stopColor="#fff" /><stop offset="1" stopColor="#bbb" /></linearGradient>
          <linearGradient id="gold" x1="0" y1="0" x2="0" y2="1"><stop offset="0" stopColor="#fff0a0" /><stop offset="1" stopColor="#e9a820" /></linearGradient>
          <linearGradient id="body" x1="0" y1="0" x2="1" y2="0"><stop offset="0" stopColor="#6b4a12" /><stop offset="0.500" stopColor="#563a0a" /><stop offset="1" stopColor="#3c2703" /></linearGradient>
          <radialGradient id="shine" cx="0.200" cy="0.600" r="0.450"><stop offset="0" stopColor="#c3a67a" /><stop offset="1" stopColor="#6b4a12" stopOpacity="0" /></radialGradient>
          <radialGradient id="shine2" cx="0.400" cy="0.500" r="0.600"><stop offset="0" stopColor="#c0a57b" /><stop offset="1" stopColor="#5b3d0a" stopOpacity="0.200" /></radialGradient>
          <radialGradient id="shineY" cx="0.500" cy="0.800" r="0.700"><stop offset="0" stopColor="#c9a884" /><stop offset="1" stopColor="#5b3d0a" /></radialGradient>
          <pattern id="grid" width="30" height="30" x="28" y="3" patternUnits="userSpaceOnUse">
            <path d="M6.500 0V30M12.500 0V30M18.500 0V30M24.500 0V30M0 6.500H30M0 12.500H30M0 18.500H30M0 24.500H30" stroke="#8c8c8c" strokeWidth="1" />
            <path d="M0.500 0V30M0 0.500H30" stroke="#848484" strokeWidth="1" />
          </pattern>
        </defs>
      </svg>

      <nav className="flex h-[18px] shrink-0 items-center gap-[10px] border-b border-[#aca899] text-[#a5a08d]">
        {menus.map(([t, k]) => (
          <a key={t} href="#" className="shrink-0 leading-4 whitespace-nowrap">
            {k ? <>{t}<span className="font-['Liberation_Mono'] text-[11px]">(<u>{k}</u>)</span></> : <span className="font-['Liberation_Mono'] text-[11px]">{t}</span>}
          </a>
        ))}
      </nav>

      <div className="shrink-0 bg-white">
        <p className="h-[22px] border-b border-black pl-[2px] leading-6">已加入<span className="font-['Liberation_Mono'] text-[11px] whitespace-pre"> 3 </span>个曲面至选取集合。</p>
        <label className="flex h-[15px] items-center pl-[2px] leading-3 font-bold">
          指令:
          <input type="text" className="ml-1 h-3 flex-1 font-normal outline-none" />
        </label>
      </div>
      <div className="h-2 shrink-0 bg-[#f1f0ea]" />

      <div className="flex h-[29px] shrink-0 border-t border-[#aca899]"><Bar tools={standard} /></div>
      <div className="flex h-[29px] shrink-0 overflow-hidden border-t border-[#aca899]"><Bar tools={curves} /><Bar tools={surfaces} grip /></div>
      <div className="flex h-[29px] shrink-0 overflow-hidden border-t border-[#aca899]"><Bar tools={surfTools} /><Bar tools={transform} grip className="grow" /></div>
      <div className="flex h-[30px] shrink-0 border-y border-[#aca899]">
        <Bar tools={meshTools} />
        <Bar tools={scaleTools} grip className="ml-2 border-l" />
        <Bar tools={display} grip soft className="mr-9 ml-auto border-l" />
      </div>

      <main className="flex min-h-0 flex-1">
        <div className="flex shrink-0 items-start">
          <Column tools={leftCol} className="w-[23px]" />
          <Column tools={rightCol} className="w-[29px]" />
        </div>
        <div className="grid min-w-0 flex-1 grid-cols-[482fr_484fr] grid-rows-[304fr_306fr] gap-[5px] border-l border-[#777] bg-[#f6f4ec] pt-px pr-[3px] pl-px">
          <Viewport title="Top" box="55 182 482 304" grid><TopView /></Viewport>
          <Viewport title="Perspective" box="542 182 484 304"><PerspectiveView /></Viewport>
          <Viewport title="Front" active box="55 491 482 306" grid><FrontView /></Viewport>
          <Viewport title="Right" box="542 491 484 306" grid><RightView /></Viewport>
        </div>

        <aside className="w-[105px] shrink-0 overflow-hidden border-l-8 border-[#f7f6f0] bg-[#ece9d8] text-[13px]">
          <div className="flex h-[18px] items-center gap-2 bg-[#f3f1e8] pl-1.5 text-xs text-[#a5a08d]">
            属性<span className="h-[6px] flex-1 bg-[radial-gradient(circle,#aaa79a_1px,transparent_1px)] bg-size-[4px_3px]" />
          </div>
          <select aria-label="属性" className="block h-5 w-full appearance-none border border-r-0 border-[#7f9db9] bg-white pl-[3px] leading-4">
            <option>物件</option>
          </select>
          <div className="pt-1">
            {groups.map(([title, rows]) => (
              <table key={title} className="w-full table-fixed border-collapse">
                <caption className="h-[22px] pl-1 text-left leading-[22px] whitespace-nowrap text-[#1c4f9f]">{title}</caption>
                <tbody>
                  {rows.map((r) => (
                    <tr key={r} className="h-[19px]">
                      <td className="w-[22px]" />
                      <th scope="row" className={`w-[71px] border-b border-[#ece9d8] bg-white pl-1 text-left leading-[18px] font-normal whitespace-nowrap ${r === "设置" ? "text-[#b0ac9c]" : ""}`}>{r}</th>
                      <td className={`border-b border-l border-[#ece9d8] ${r === "图层" ? "bg-[#4a3b18]" : "bg-white"}`} />
                    </tr>
                  ))}
                </tbody>
              </table>
            ))}
          </div>
          <div className="mt-1.5 flex flex-col gap-[3px] pl-px">
            <button type="button" className="h-[21px] rounded-l-[3px] border border-r-0 border-[#1d4460] bg-linear-to-b from-white to-[#eae8de] pl-[69px] text-left leading-4 whitespace-nowrap">符合</button>
            <button type="button" className="h-[21px] rounded-l-[3px] border border-r-0 border-[#1d4460] bg-linear-to-b from-white to-[#eae8de] pl-[53px] text-left leading-4 whitespace-nowrap">详细数据</button>
          </div>
        </aside>
      </main>

      <footer className="relative flex h-[26px] shrink-0 items-center border-t-2 border-white pb-[2px] text-[#aaa693]">
        <div className="flex h-full items-center border-b border-[#aca899] pr-8 pl-1">
          {snaps.map(([t, on]) => (
            <label key={t} className="flex w-[67px] shrink-0 items-center gap-1 whitespace-nowrap">
              <span className="grid place-items-center">
                <input type="checkbox" defaultChecked={!!on} disabled className="col-start-1 row-start-1 h-[13px] w-[13px] appearance-none border border-[#cbc8b9] bg-white" />
                {on && <svg viewBox="0 0 9 9" className="col-start-1 row-start-1 h-[9px] w-[9px]"><path d="M1 4L3.500 7L8 2" fill="none" stroke="#aaa693" strokeWidth="1.800" /></svg>}
              </span>
              {t}
            </label>
          ))}
          <label className="flex shrink-0 items-center gap-1 text-black">
            <input type="checkbox" defaultChecked className="h-[13px] w-[13px] appearance-none rounded-[2px] border border-[#1c5180] bg-[#0d3c78] shadow-[inset_0_0_0_1px_#fff]" />
            停用
          </label>
        </div>
        <span className="h-5 border-l border-[#aca899]" />
        <div className="pointer-events-none absolute -top-3 left-[368px] flex items-start whitespace-pre">
          <svg viewBox="0 0 36 28" className="h-7 w-9" aria-hidden="true">
            <path d="M5 2Q10 0 13 4L15 10Q22 12 24 18L34 14L28 20L24 27L19 21L13 19L8 15L2 12L7 11Z" fill="#999" stroke="#666" />
            <path d="M7 4L12 10L17 15L23 20M11 14L19 18M9 3L12 6" stroke="#eee" fill="none" />
          </svg>
          <span className="pt-2.5 pl-[5px] font-['Liberation_Mono','Noto_Sans_CJK_SC',monospace] leading-4 font-bold text-[#e8e8e8] [text-shadow:-1px_0_#555,1px_0_#555,0_-1px_#555,0_1px_#555]">
            <span className="text-[#f3c4c0] [text-shadow:-1px_0_#9c4444,1px_0_#9c4444,0_-1px_#9c4444,0_1px_#9c4444]">学犀牛</span>中文网 xuexiniu.com － 国内最大的<span className="text-[11px]">Rhino</span>技术交流平台
          </span>
        </div>
      </footer>
    </div>
  );
}
